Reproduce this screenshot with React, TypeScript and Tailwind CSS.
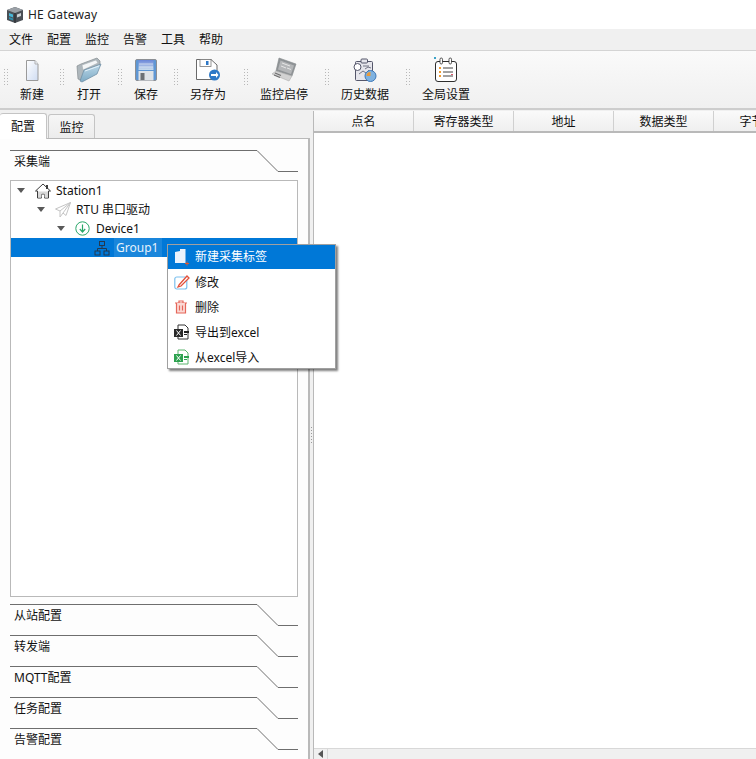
import React from "react";

const Handle = ({ width }: { width: string }) => (
  <div className={`${width} flex justify-end items-center h-full pb-[6px]`}>
    <svg width="4" height="16" viewBox="0 0 4 16">
      {[0, 3, 6, 9, 12, 15].map((y) => (
        <g key={y} fill="#b8b8b8">
          <rect x="0" y={y} width="1" height="1" />
          <rect x="3" y={y} width="1" height="1" />
        </g>
      ))}
    </svg>
  </div>
);

const NewIcon = () => (
  <svg width="24" height="24" viewBox="0 0 24 24">
    <defs>
      <linearGradient id="ng" x1="0" y1="0" x2="1" y2="1">
        <stop offset="0" stopColor="#ffffff" />
        <stop offset="1" stopColor="#cfdcf2" />
      </linearGradient>
    </defs>
    <path d="M6.5 2.5H15l3 3.500V22.500H6.500Z" fill="url(#ng)" stroke="#9a9a9a" />
    <path d="M15 2.500V6h3" fill="#eef2fa" stroke="#b0b0b0" />
  </svg>
);

const OpenIcon = () => (
  <svg width="26" height="26" viewBox="0 0 26 26">
    <defs>
      <linearGradient id="og" x1="0" y1="0" x2="0" y2="1">
        <stop offset="0" stopColor="#bcd9ea" />
        <stop offset="1" stopColor="#7eaac4" />
      </linearGradient>
    </defs>
    <path d="M2 22 1 9l4-2 16-6 3 3 0 5L7 24Z" fill="#aeb7bc" stroke="#858c91" strokeWidth=".7" />
    <path d="M6 8 20 3l2 3L7 13Z" fill="#f4f6f7" stroke="#a0a8ac" strokeWidth=".5" />
    <path d="M4 24 8 13 25 7 21 17 6 25Z" fill="url(#og)" stroke="#6a8aa0" strokeWidth=".7" />
    <path d="M9 14 23 9" stroke="#e4f2f9" strokeWidth="1" />
  </svg>
);

const SaveIcon = () => (
  <svg width="22" height="22" viewBox="0 0 22 22">
    <defs>
      <linearGradient id="sg" x1="0" y1="0" x2="0" y2="1">
        <stop offset="0" stopColor="#6a86d8" />
        <stop offset="1" stopColor="#c8dcec" />
      </linearGradient>
    </defs>
    <rect x=".5" y=".5" width="21" height="21" rx="1.500" fill="#5f97d4" stroke="#8c8f94" />
    <rect x="3.500" y="1" width="15" height="10" fill="url(#sg)" />
    <path d="M4 5h14M4 8h14" stroke="#e6eff6" strokeWidth=".7" />
    <rect x="3.500" y="12" width="15" height="9.500" fill="#dfe3e7" />
    <rect x="5.500" y="14" width="4" height="7" fill="#6c7074" />
  </svg>
);

const SaveAsIcon = () => (
  <svg width="24" height="22" viewBox="0 0 24 22">
    <path d="M.5.5H15L21 6V20.500H.500Z" fill="#fff" stroke="#6a6a6a" />
    <rect x="4" y=".5" width="11" height="7" fill="#fff" stroke="#7a7a7a" strokeWidth=".8" />
    <rect x="10" y="2" width="2.500" height="4" fill="#2f79c7" />
    <circle cx="18.500" cy="16" r="5.500" fill="#2f79c7" />
    <path d="M15 15h5v-2l2.500 3-2.500 3v-2h-5Z" fill="#fff" />
  </svg>
);

const MonitorIcon = () => (
  <svg width="26" height="26" viewBox="0 0 26 26">
    <path d="M8 1 25 7 21 19 5 14Z" fill="#8f9396" stroke="#85898c" strokeWidth=".6" />
    <path d="M9.500 3.500 23 8.500 20 17 7 12.500Z" fill="#b4b6b8" />
    <path d="M11 6l8 3M10 9l5 2M16 11l4 1.500" stroke="#e6e6e6" strokeWidth="1" />
    <path d="M1 17 5 14 21 19 18 24Z" fill="#d2d2d2" stroke="#adadad" strokeWidth=".6" />
    <path d="M4 16l6 2.500M3 18l6 2.500" stroke="#6f6f6f" strokeWidth="1.200" />
  </svg>
);

const HistoryIcon = () => (
  <svg width="25" height="25" viewBox="0 0 25 25">
    <rect x="2.500" y="3.500" width="17" height="19" rx="1" fill="#e6e6ec" stroke="#54566a" />
    <rect x="8" y="1" width="6.500" height="4" rx="1" fill="#e6e6ec" stroke="#54566a" />
    <circle cx="4.500" cy="9" r="3.500" fill="#fff" stroke="#54566a" />
    <path d="M10 8h6M12 11l3-2 3 1M6 16l4-3 3 2 3-3" stroke="#54566a" strokeWidth=".8" fill="none" />
    <circle cx="17.500" cy="18" r="5.500" fill="#7fb2e0" stroke="#3f78b8" />
    <path d="M17.500 18v-4a4 4 0 0 0-4 4Z" fill="#e89a3c" />
  </svg>
);

const SettingsIcon = () => (
  <svg width="24" height="26" viewBox="0 0 24 26">
    <rect x="1.500" y="4.500" width="21" height="20" rx="2.500" fill="#fff" stroke="#2d2d2d" />
    <rect x="6" y="1" width="2.500" height="6" rx="1.250" fill="#fff" stroke="#2d2d2d" strokeWidth=".8" />
    <rect x="15" y="1" width="2.500" height="6" rx="1.250" fill="#fff" stroke="#2d2d2d" strokeWidth=".8" />
    <rect x="0" y="0" width="2" height="2" fill="#3aa2c8" />
    <path d="M9 11h10M9 15h10M9 19h10" stroke="#444" strokeWidth="1" />
    <rect x="5" y="10" width="2" height="2" fill="#ef9a30" />
    <rect x="5" y="14" width="2" height="2" fill="#ef9a30" />
    <rect x="5" y="18" width="2" height="2" fill="#ef9a30" />
    <rect x="17" y="17" width="2" height="1" fill="#e0566a" />
  </svg>
);

const tools: { label: string; icon: React.ReactNode; handle: string }[] = [
  { label: "新建", icon: <NewIcon />, handle: "w-[8px]" },
  { label: "打开", icon: <OpenIcon />, handle: "w-[8px]" },
  { label: "保存", icon: <SaveIcon />, handle: "w-[8px]" },
  { label: "另存为", icon: <SaveAsIcon />, handle: "w-[8px]" },
  { label: "监控启停", icon: <MonitorIcon />, handle: "w-[10px]" },
  { label: "历史数据", icon: <HistoryIcon />, handle: "w-[9px]" },
  { label: "全局设置", icon: <SettingsIcon />, handle: "w-[9px]" },
];

const AppLogo = () => (
  <svg width="18" height="18" viewBox="0 0 18 18">
    <path d="M1 4 9 1l8 3v10l-8 3-8-3Z" fill="#4a4f55" />
    <path d="M1 4l8 3 8-3-8-3Z" fill="#9aa0a6" />
    <path d="M3 7l4 1.500v3L3 10Z" fill="#47b6d6" />
    <path d="M3 11l4 1.500v2L3 13Z" fill="#2f8fae" />
    <path d="M11 8.500 15 7v3l-4 1.500Z" fill="#c9d0d4" />
    <path d="M9 7v10" stroke="#22262a" />
  </svg>
);

const Arrow = () => (
  <svg width="8" height="5" viewBox="0 0 8 5" className="shrink-0">
    <path d="M0 0h8L4 5Z" fill="#595959" />
  </svg>
);

const HomeIcon = () => (
  <svg width="16" height="16" viewBox="0 0 16 16">
    <path d="M8 1 .5 8h2v7h4v-4h3v4h4V8h2Z" fill="#fff" stroke="#3c3c3c" strokeWidth="1" strokeLinejoin="round" />
    <rect x="11" y="2" width="2" height="4" fill="#3c3c3c" />
    <path d="M3 8.500V14.500H6.500V10.500H9.500V14.500H13V8.500" fill="#d8d8d8" />
  </svg>
);

const PlaneIcon = () => (
  <svg width="16" height="16" viewBox="0 0 16 16" fill="none" stroke="#c4c4c4" strokeWidth="1">
    <path d="M15.500.5.500 7l4.500 2L15.500.5 8 11l3 2.500Z" strokeLinejoin="round" />
    <path d="M5 9v6l3-4" strokeLinejoin="round" />
  </svg>
);

const DeviceIcon = () => (
  <svg width="15" height="15" viewBox="0 0 15 15" fill="none">
    <circle cx="7.500" cy="7.500" r="6.700" stroke="#28a668" strokeWidth="1" />
    <path d="M7.500 3.500V10.500M4.800 8 7.500 11l2.700-3" stroke="#28a668" strokeWidth="1.200" />
  </svg>
);

const GroupIcon = () => (
  <svg width="16" height="16" viewBox="0 0 16 16" fill="none" stroke="#24384f" strokeWidth="1">
    <rect x="5.500" y="1.500" width="5" height="4" />
    <rect x="1" y="11" width="5" height="4" />
    <rect x="10" y="11" width="5" height="4" />
    <path d="M8 5.500V8.500M3.500 11V8.500H12.500V11" />
  </svg>
);

const MenuNew = () => (
  <svg width="16" height="18" viewBox="0 0 16 18">
    <path d="M1 4 6 3V1H11.500V15H1Z" fill="#eaf2fc" />
    <path d="M11 15h4v1h-4Z" fill="#e2572c" />
    <rect x="12.500" y="13.500" width="1" height="4" fill="#e2572c" />
  </svg>
);

const MenuEdit = () => (
  <svg width="16" height="16" viewBox="0 0 16 16" fill="none">
    <rect x=".8" y="3" width="12" height="12" rx="2" stroke="#7cc0ee" strokeWidth="1.200" />
    <path d="M5 11 13 2l2 2-8 8-3 1Z" fill="#fff" stroke="#e2503a" strokeWidth="1.300" />
  </svg>
);

const MenuDelete = () => (
  <svg width="14" height="14" viewBox="0 0 14 14" fill="none" stroke="#e5675a" strokeWidth="1.200">
    <path d="M1 3h12M5 3V1h4v2" />
    <path d="M2.500 3v10h9V3" fill="#fbd9d4" />
    <path d="M5.500 5.500v5M8.500 5.500v5" />
  </svg>
);

const MenuExport = () => (
  <svg width="16" height="16" viewBox="0 0 16 16">
    <path d="M4 1h7l3 3v11H4Z" fill="#fff" stroke="#333" />
    <rect x="0" y="5" width="9" height="8" fill="#2a2a2a" />
    <path d="M2.500 6.500 6.500 11.500M6.500 6.500 2.500 11.500" stroke="#fff" strokeWidth="1" />
    <rect x="10" y="7" width="5" height="2" fill="#222" />
    <rect x="10" y="10" width="3" height="1" fill="#222" />
  </svg>
);

const MenuImport = () => (
  <svg width="16" height="16" viewBox="0 0 16 16">
    <path d="M4 1h7l3 3v11H4Z" fill="#fff" stroke="#5cb56f" />
    <rect x="0" y="5" width="9" height="8" fill="#2da24f" />
    <path d="M2.500 6.500 6.500 11.500M6.500 6.500 2.500 11.500" stroke="#fff" strokeWidth="1" />
    <rect x="10" y="7" width="5" height="2" fill="#2da24f" />
    <rect x="10" y="10" width="3" height="1" fill="#2da24f" />
  </svg>
);

const menuItems: { label: string; icon: React.ReactNode; active?: boolean }[] = [
  { label: "新建采集标签", icon: <MenuNew />, active: true },
  { label: "修改", icon: <MenuEdit /> },
  { label: "删除", icon: <MenuDelete /> },
  { label: "导出到excel", icon: <MenuExport /> },
  { label: "从excel导入", icon: <MenuImport /> },
];

const SectionHeader = ({ label, tall }: { label: string; tall?: boolean }) => (
  <div className={tall ? "relative h-[30px] shrink-0" : "relative h-[31px] shrink-0"}>
    <svg width="288" height="24" viewBox="0 0 288 24" className="absolute left-0 top-0">
      <path d="M0 .5H247L268 21.500H288" fill="none" stroke="#6e6e6e" strokeWidth="1" />
    </svg>
    <div className="relative pl-1 pt-[3px] leading-[18px]">{label}</div>
  </div>
);

const columns = ["点名", "寄存器类型", "地址", "数据类型", "字节顺序"];

export default function App() {
  return (
    <div className="w-full h-[759px] overflow-hidden flex flex-col bg-[#f0f0f0] text-[12px] text-[#111] font-['Noto_Sans','Noto_Sans_CJK_SC',sans-serif]">
      <div className="h-[29px] shrink-0 bg-white flex items-center gap-[4px] pl-[6px]">
        <AppLogo />
        <span className="text-[#222] text-[12px] tracking-[0.2px]">HE Gateway</span>
      </div>

      <div className="h-[22px] shrink-0 bg-[#f0f0f0] border-b border-[#d4d4d4] flex items-center px-[2px]">
        {["文件", "配置", "监控", "告警", "工具", "帮助"].map((m) => (
          <span key={m} className="px-[7px]">{m}</span>
        ))}
      </div>

      <div className="h-[59px] shrink-0 bg-gradient-to-b from-[#fafafa] to-[#f0f0f0] border-b-2 border-[#cdcdcd] flex items-stretch">
        {tools.map((t) => (
          <React.Fragment key={t.label}>
            <Handle width={t.handle} />
            <div className="px-3 pt-[4px] flex flex-col items-center">
              <div className="h-[30px] flex items-center justify-center">{t.icon}</div>
              <div className="mt-[1px] leading-[18px]">{t.label}</div>
            </div>
          </React.Fragment>
        ))}
      </div>

      <div className="flex-1 min-h-0 flex">
        <div className="w-[310px] shrink-0 flex flex-col pt-[2px]">
          <div className="h-[26px] shrink-0 flex items-end relative z-10">
            <div className="w-[47px] h-[26px] bg-white border border-b-0 border-[#c4c4c4] rounded-t-[3px] border-l-0 flex items-center justify-center -mb-[1px]">配置</div>
            <div className="ml-[1px] w-[47px] h-[24px] pt-[2px] bg-gradient-to-b from-[#f6f6f6] to-[#ececec] border border-b-0 border-[#c4c4c4] rounded-t-[3px] flex items-center justify-center">监控</div>
          </div>
          <div className="flex-1 min-h-0 bg-[#fdfdfd] border-t border-r-2 border-[#b9b9b9] px-[10px] pt-[11px] flex flex-col">
            <SectionHeader label="采集端" tall />
            <div className="flex-1 min-h-0 mb-[7px] bg-white border border-[#b9b9b9] relative">
              <div className="h-[19px] flex items-center pl-[6px] gap-[5px]">
                <Arrow /><span className="ml-[5px] flex"><HomeIcon /></span><span>Station1</span>
              </div>
              <div className="h-[19px] flex items-center pl-[26px] gap-[5px]">
                <Arrow /><span className="ml-[5px] flex"><PlaneIcon /></span><span>RTU 串口驱动</span>
              </div>
              <div className="h-[19px] flex items-center pl-[46px] gap-[5px]">
                <Arrow /><span className="ml-[5px] flex"><DeviceIcon /></span><span className="pl-[1px]">Device1</span>
              </div>
              <div className="h-[19px] flex items-center pl-[83px] gap-[4px] bg-[#0078d7]">
                <GroupIcon />
                <span className="bg-[#1a86db] text-[#e8f2fb] pl-[2px] pr-[4px] leading-[19px]">Group1</span>
              </div>
            </div>
            <SectionHeader label="从站配置" />
            <SectionHeader label="转发端" />
            <SectionHeader label="MQTT配置" />
            <SectionHeader label="任务配置" />
            <SectionHeader label="告警配置" />
          </div>
        </div>

        <div className="w-[3px] shrink-0 relative flex items-center justify-center">
          <div className="flex flex-col gap-[2px]">
            {[0, 1, 2, 3, 4, 5].map((d) => (
              <div key={d} className="w-[1px] h-[1px] bg-[#9a9a9a]" />
            ))}
          </div>
        </div>

        <div className="flex-1 min-w-0 mt-[1px] bg-white border-l border-[#b9b9b9] flex flex-col">
          <div className="h-[22px] shrink-0 flex bg-gradient-to-b from-[#fafafa] to-[#efefef] border-b-2 border-[#b9b9b9] overflow-hidden">
            {columns.map((c) => (
              <div key={c} className="w-[100px] shrink-0 pt-[2px] border-r border-[#d0d0d0] flex items-center justify-center">{c}</div>
            ))}
          </div>
          <div className="flex-1" />
          <div className="h-[11px] shrink-0 bg-[#f0f0f0] border-t border-[#d8d8d8] flex items-center">
            <div className="w-[14px] flex justify-center border-r border-[#d8d8d8] h-full items-center">
              <svg width="5" height="8" viewBox="0 0 5 8"><path d="M5 0v8L0 4Z" fill="#555" /></svg>
            </div>
          </div>
        </div>
      </div>

      <div className="absolute left-[167px] top-[244px] w-[169px] h-[125px] bg-white border border-[#a0a0a0] shadow-[2px_2px_2px_rgba(0,0,0,0.5)] z-20">
        {menuItems.map((m) => (
          <div
            key={m.label}
            className={m.active ? "h-[24px] flex items-center bg-[#0078d7] text-white" : "h-[25px] flex items-center"}
          >
            <div className="w-[27px] pl-[6px] flex items-center shrink-0">{m.icon}</div>
            <span className={m.active ? "" : "pt-[2px]"}>{m.label}</span>
          </div>
        ))}
      </div>
    </div>
  );
}
